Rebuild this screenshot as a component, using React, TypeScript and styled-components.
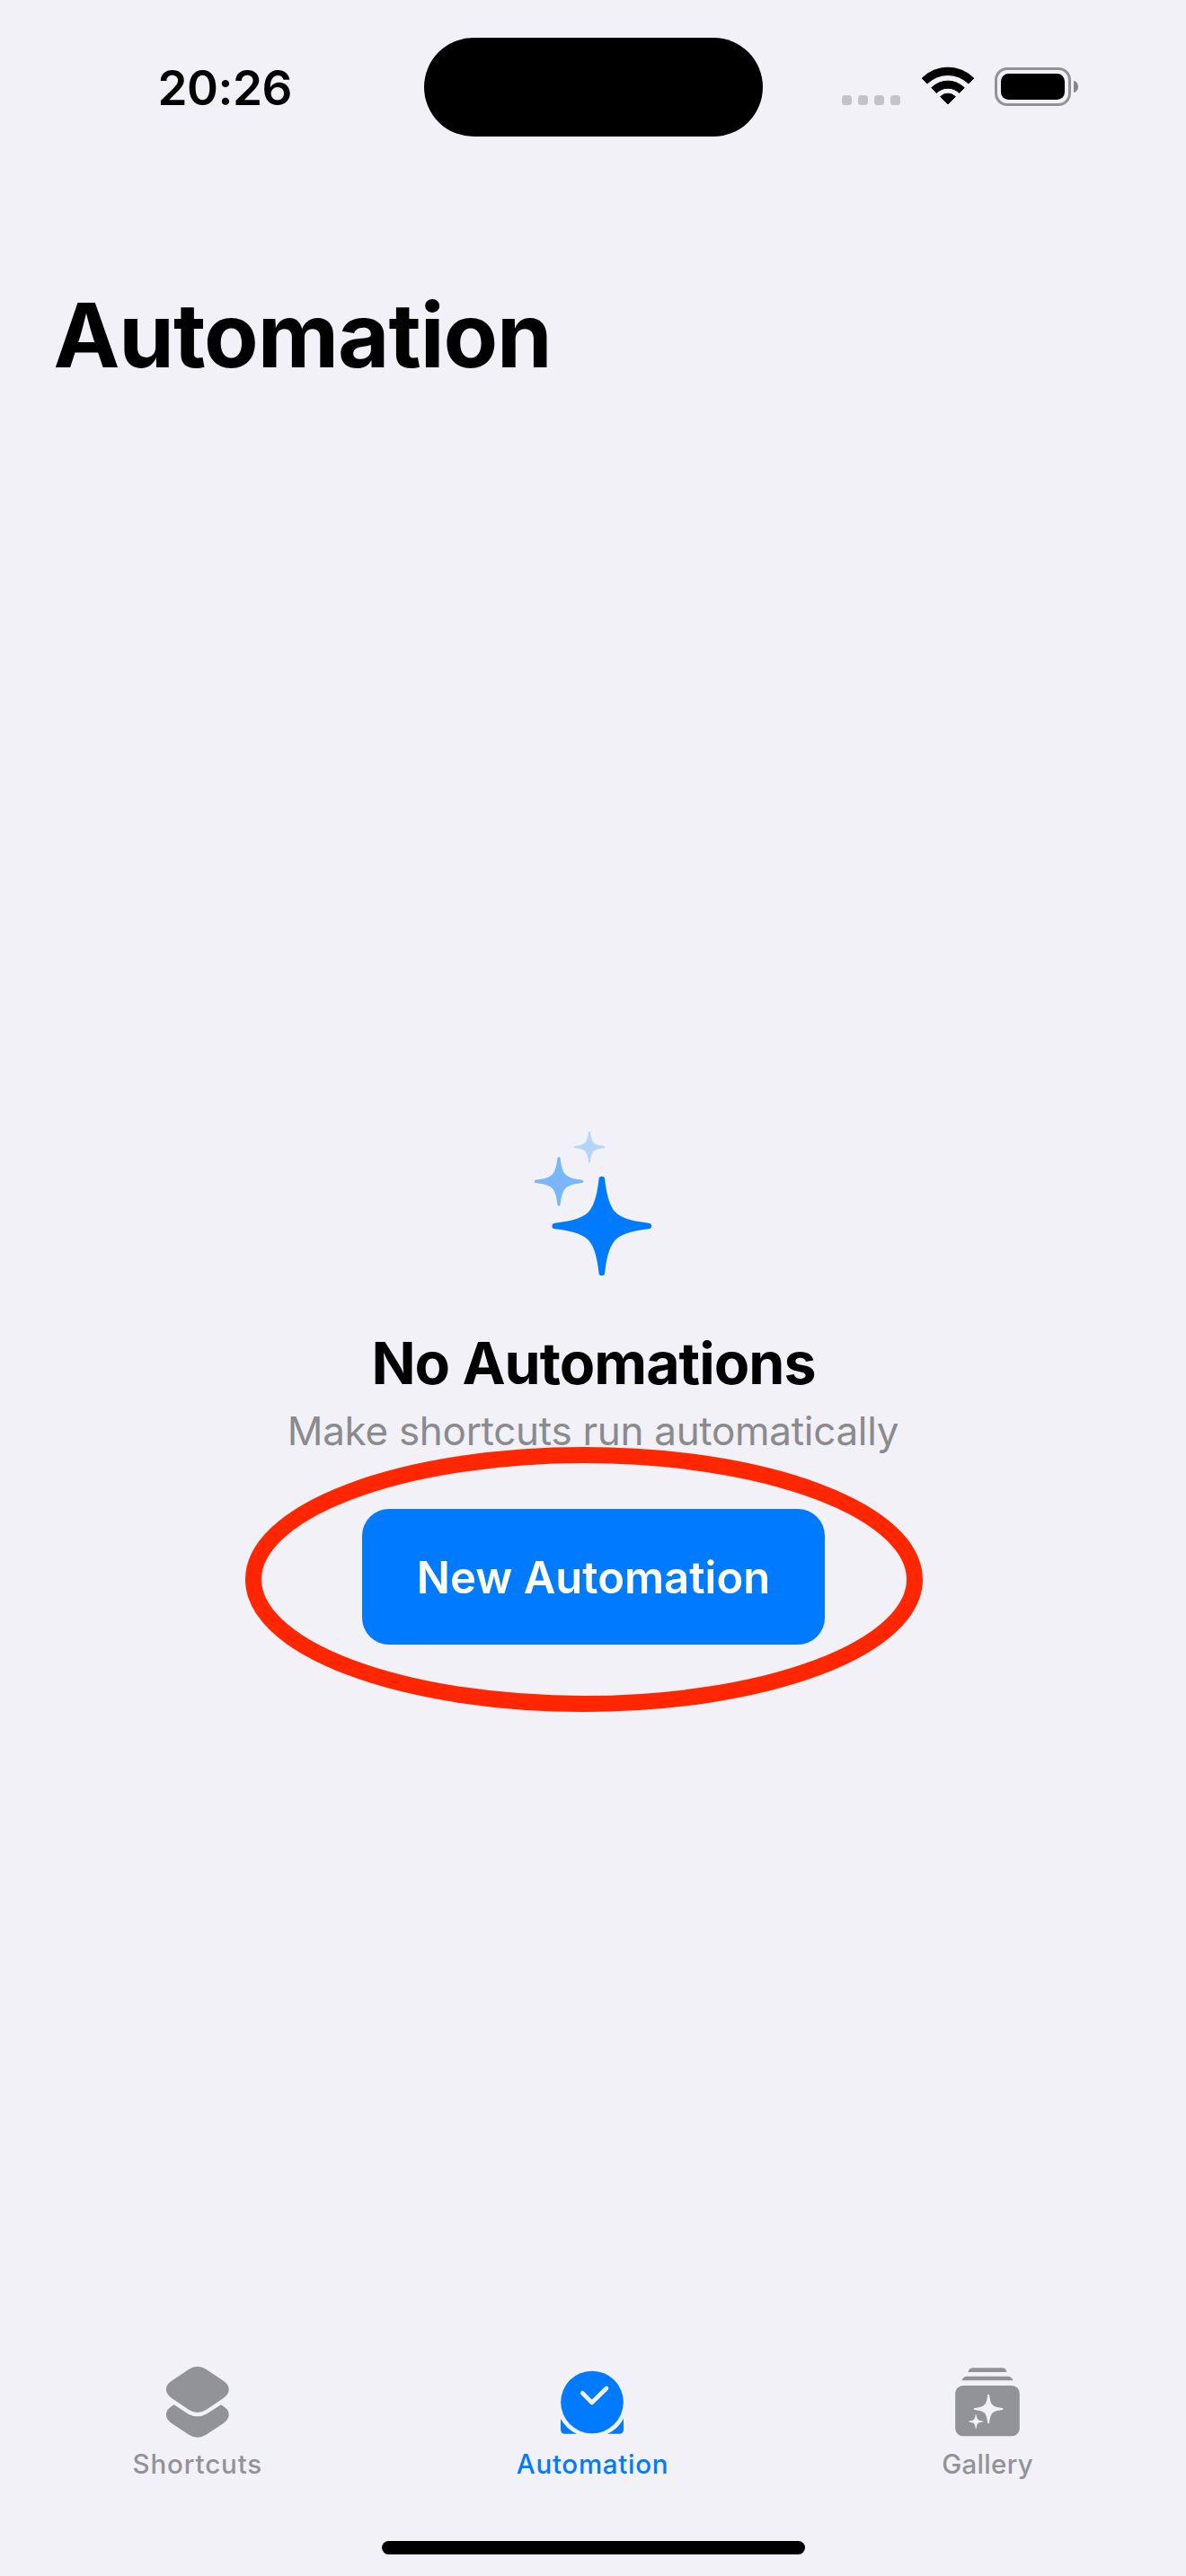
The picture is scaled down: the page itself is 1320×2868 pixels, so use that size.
import React from 'react';
import styled, { createGlobalStyle } from 'styled-components';

const color = {
  background: '#f2f1f8',
  ink: '#000000',
  blue: '#007aff',
  gray: '#929299',
  subtitle: '#8a8a8f',
  red: '#ff2600',
};

const GlobalStyle = createGlobalStyle`
  *, *::before, *::after { box-sizing: border-box; }
  body { margin: 0; background: ${color.background}; }
  h1, h2, p { margin: 0; }
`;

const Screen = styled.div`
  display: flex;
  flex-direction: column;
  width: 1320px;
  height: 2868px;
  overflow: hidden;
  background: ${color.background};
  color: ${color.ink};
  font-family: Inter, Roboto, 'Liberation Sans', sans-serif;
`;

const StatusBar = styled.div`
  display: grid;
  grid-template-columns: 472px 376.5px 471.5px;
  grid-template-rows: 110px;
  height: 152px;
  padding-top: 42px;
`;

const Time = styled.div`
  padding: 2px 0 0 175.5px;
  font-size: 53px;
  font-weight: 600;
  line-height: 108px;
  letter-spacing: -0.5px;
`;

const Island = styled.div`
  height: 110px;
  border-radius: 55px;
  background: ${color.ink};
`;

const StatusIcons = styled.div`
  display: flex;
  align-items: flex-end;
  padding: 0 0 34px 88.5px;
`;

const Signal = styled.div`
  display: flex;
  gap: 7px;
  margin: 0 23px 1px 0;
`;

const SignalDot = styled.span`
  width: 11px;
  height: 11px;
  border-radius: 3.5px;
  background: #c3c2c8;
`;

const Battery = styled.div`
  display: flex;
  align-items: center;
  gap: 3px;
  margin-left: 22px;
`;

const BatteryShell = styled.div`
  width: 85px;
  height: 43px;
  padding: 4px;
  border: 3px solid #939298;
  border-radius: 14px;
`;

const BatteryLevel = styled.div`
  height: 100%;
  border-radius: 8.5px;
  background: ${color.ink};
`;

const BatteryCap = styled.div`
  width: 5px;
  height: 13px;
  border-radius: 0 5px 5px 0 / 0 6.5px 6.5px 0;
  background: #87868c;
`;

const Title = styled.h1`
  padding: 161px 0 0 59.5px;
  font-size: 99px;
  font-weight: 700;
  line-height: 120px;
  letter-spacing: -1.07px;
`;

const Main = styled.main`
  display: flex;
  flex: 1;
  flex-direction: column;
  align-items: center;
  padding-top: 826.5px;
`;

const Heading = styled.h2`
  margin-top: 58.83px;
  padding-left: 1px;
  font-size: 64.5px;
  font-weight: 700;
  line-height: 78px;
  letter-spacing: -1px;
`;

const Subtitle = styled.p`
  margin: 9px 0 60px;
  color: ${color.subtitle};
  font-size: 44px;
  line-height: 54px;
  letter-spacing: -0.3px;
`;

const ButtonArea = styled.div`
  position: relative;
  padding-left: 1px;
`;

const PrimaryButton = styled.button`
  display: block;
  width: 515px;
  height: 151px;
  padding: 2px 0 0;
  border: 0;
  border-radius: 30px;
  background: ${color.blue};
  color: #ffffff;
  font: 600 49px Inter, Roboto, 'Liberation Sans', sans-serif;
`;

const Highlight = styled.svg`
  position: absolute;
  top: -69px;
  left: -129px;
  pointer-events: none;
`;

const TabBar = styled.nav`
  display: grid;
  grid-template-columns: repeat(3, 1fr);
  padding-right: 1px;
`;

const Tab = styled.div<{ $active?: boolean }>`
  display: flex;
  flex-direction: column;
  align-items: center;
  color: ${({ $active }) => ($active ? color.blue : color.gray)};
`;

const TabLabel = styled.span<{ $spacing: number }>`
  margin-top: 8.33px;
  font-size: 29.5px;
  font-weight: 500;
  line-height: 36px;
  letter-spacing: ${({ $spacing }) => $spacing}px;
`;

const HomeIndicator = styled.div`
  flex: none;
  width: 471px;
  height: 15px;
  margin: 68px 0 24px 425px;
  border-radius: 8px;
  background: ${color.ink};
`;

/* Four-pointed star, 334 units across, centred on the origin. */
const STAR =
  'M-10-157C-14-122-22-70-46-46C-70-22-122-14-157-10A10 10 0 0 0-157 10C-122 14-70 22-46 46C-22 70-14 122-10 157A10 10 0 0 0 10 157C14 122 22 70 46 46C70 22 122 14 157 10A10 10 0 0 0 157-10C122-14 70-22 46-46C22-70 14-122 10-157A10 10 0 0 0-10-157Z';

const Star = ({ x, y, radius, fill }: { x: number; y: number; radius: number; fill: string }) => (
  <path d={STAR} fill={fill} transform={`translate(${x} ${y}) scale(${radius / 167})`} />
);

const Sparkles = () => (
  <svg width="130.33" height="160.67" viewBox="105 59 391 482">
    <Star x={288} y={110} radius={52} fill="#b3d5fb" />
    <Star x={186} y={225} radius={82} fill="#7ab6fc" />
    <Star x={329.5} y={374} radius={166} fill={color.blue} />
  </svg>
);

const WifiIcon = () => (
  <svg width="60" height="44" viewBox="-90 -126 180 132" fill="#000" stroke="#000" strokeWidth="3" strokeLinejoin="round">
    <path d="M-86.6-86.6A122.5 122.5 0 0 1 86.6-86.6L68.9-68.9A97.5 97.5 0 0 0-68.9-68.9Z" />
    <path d="M-54.8-54.8A77.5 77.5 0 0 1 54.8-54.8L37.8-37.8A53.5 53.5 0 0 0-37.8-37.8Z" />
    <path d="M-25.1-25.1A35.5 35.5 0 0 1 25.1-25.1L0 0Z" />
  </svg>
);

const ShortcutsIcon = () => (
  <svg width="80" height="86.67" viewBox="149 60 240 260" fill="currentColor">
    <path d="M240 83Q268 66 297 83L356 123C379 138 379 163 356 179L297 219Q268 237 240 219L181 179C158 163 158 138 181 123Z" />
    <path d="M190 202L238 233Q268 249 298 233L347 202L356 208C379 222 379 247 356 263L297 302Q268 320 240 302L181 263C158 247 158 222 181 208Z" />
  </svg>
);

const AutomationIcon = () => (
  <svg width="80" height="86.67" viewBox="207 60 240 260" fill="currentColor">
    <circle cx="327" cy="193.5" r="104.5" />
    <path d="M222 249A118 118 0 0 0 276 299.5H237Q222 299.5 222 284.5Z" />
    <path d="M432 249A118 118 0 0 1 378 299.5H417Q432 299.5 432 284.5Z" />
    <path
      d="M295 163L326 195L375 147"
      fill="none"
      stroke={color.background}
      strokeWidth="14"
      strokeLinecap="round"
      strokeLinejoin="round"
    />
  </svg>
);

const GalleryIcon = () => (
  <svg width="80" height="86.67" viewBox="115.5 60 240 260" fill="currentColor">
    <path d="M171 93Q174 79 187 79H285Q297 79 300 93Z" />
    <path d="M150 121Q154 107 168 107H304Q316 107 321 121Z" />
    <rect x="128" y="138" width="215" height="169" rx="26" />
    <Star x={239} y={216} radius={49} fill={color.background} />
    <Star x={197} y={258} radius={24} fill={color.background} />
  </svg>
);

const tabs = [
  { label: 'Shortcuts', Icon: ShortcutsIcon, spacing: 0.86 },
  { label: 'Automation', Icon: AutomationIcon, spacing: 0.72, active: true },
  { label: 'Gallery', Icon: GalleryIcon, spacing: 0.3 },
];

export default function App() {
  return (
    <>
      <GlobalStyle />
      <Screen>
        <StatusBar>
          <Time>20:26</Time>
          <Island />
          <StatusIcons>
            <Signal>
              {[0, 1, 2, 3].map((dot) => (
                <SignalDot key={dot} />
              ))}
            </Signal>
            <WifiIcon />
            <Battery>
              <BatteryShell>
                <BatteryLevel />
              </BatteryShell>
              <BatteryCap />
            </Battery>
          </StatusIcons>
        </StatusBar>
        <Title>Automation</Title>
        <Main>
          <Sparkles />
          <Heading>No Automations</Heading>
          <Subtitle>Make shortcuts run automatically</Subtitle>
          <ButtonArea>
            <PrimaryButton type="button">New Automation</PrimaryButton>
            <Highlight width="755" height="296" viewBox="0 0 755 296">
              <ellipse cx="377" cy="147.5" rx="368" ry="138.5" fill="none" stroke={color.red} strokeWidth="18" />
            </Highlight>
          </ButtonArea>
        </Main>
        <TabBar>
          {tabs.map(({ label, Icon, spacing, active }) => (
            <Tab key={label} $active={active}>
              <Icon />
              <TabLabel $spacing={spacing}>{label}</TabLabel>
            </Tab>
          ))}
        </TabBar>
        <HomeIndicator />
      </Screen>
    </>
  );
}
